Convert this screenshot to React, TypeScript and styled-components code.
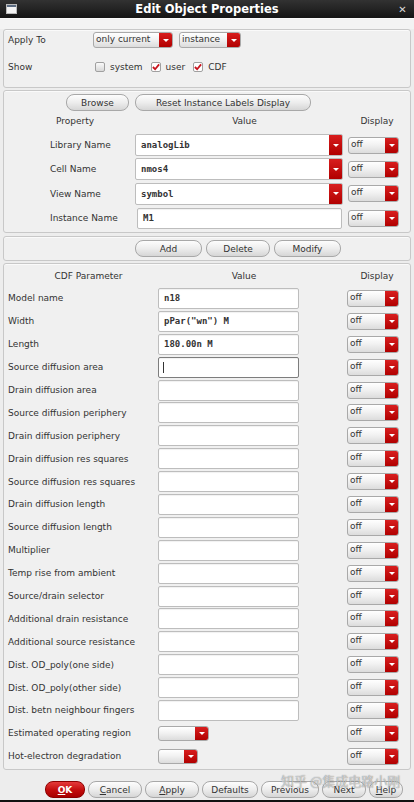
import React, { FunctionComponent } from "react";
import styled, { createGlobalStyle } from "styled-components";

const GlobalStyle = createGlobalStyle`
  html, body {
    margin: 0;
    padding: 0;
    background: #ececec;
  }
  body {
    font-family: "DejaVu Sans", "Liberation Sans", sans-serif;
    font-size: 9px;
    color: #333;
  }
`;

const Window = styled.div`
  position: relative;
  width: 414px;
  height: 802px;
  display: flex;
  flex-direction: column;
  background: #ededed;
  overflow: hidden;
`;

const TitleBar = styled.div`
  height: 18px;
  display: flex;
  align-items: center;
  background: linear-gradient(#323232, #151515);
  color: #fff;
`;

const WinIcon = styled.div`
  width: 11px;
  height: 10px;
  margin: 0 6px 0 6px;
  background: linear-gradient(#5a6a80 0 2px, #f4f4f4 2px);
  border: 1px solid #bbb;
  box-sizing: border-box;
`;

const Title = styled.div`
  flex: 1;
  text-align: center;
  font: bold 11.5px "DejaVu Sans", sans-serif;
`;

const CloseX = styled.div`
  width: 23px;
  text-align: center;
  font: bold 10px "DejaVu Sans", sans-serif;
  color: #d8d8d8;
`;

const MenuStrip = styled.div`
  height: 11px;
  background: #f3f3f3;
  border-top: 1px solid #fafafa;
  box-sizing: border-box;
`;

const Panel = styled.div<{ $h: number; $mt: number; $pt: number }>`
  height: ${(p) => p.$h}px;
  margin: ${(p) => p.$mt}px 3px 0 3px;
  padding: ${(p) => p.$pt}px 0 0 0;
  box-sizing: border-box;
  border: 1px solid #c8c8c8;
  border-radius: 3px;
  background: #f0f0f0;
  box-shadow: inset 0 1px 0 #fafafa;
`;

const Row = styled.div<{ $cols: string; $h: number; $pl: number; $mt?: number }>`
  display: grid;
  grid-template-columns: ${(p) => p.$cols};
  align-items: center;
  height: ${(p) => p.$h}px;
  padding-left: ${(p) => p.$pl}px;
  margin-top: ${(p) => p.$mt || 0}px;
`;

const Label = styled.div`
  white-space: nowrap;
  color: #333;
`;

const HeaderCell = styled.div`
  text-align: center;
  color: #333;
`;

const Inline = styled.div<{ $gap: number; $pl?: number }>`
  display: flex;
  align-items: center;
  gap: ${(p) => p.$gap}px;
  padding-left: ${(p) => p.$pl || 0}px;
`;

const SelectBox = styled.div<{ $w: number; $h: number }>`
  width: ${(p) => p.$w}px;
  height: ${(p) => p.$h}px;
  display: flex;
  box-sizing: border-box;
  border: 1px solid #a9a9a9;
  border-radius: 3px;
  background: linear-gradient(#ffffff, #f2f2f2 45%, #dcdcdc);
  overflow: hidden;
`;

const SelectText = styled.div`
  flex: 1;
  padding-left: 2px;
  line-height: 13px;
  white-space: nowrap;
  overflow: hidden;
  color: #333;
`;

const Arrow = styled.div<{ $w: number }>`
  width: ${(p) => p.$w}px;
  display: flex;
  align-items: center;
  justify-content: center;
  background: linear-gradient(#d81e1e, #b10000);
  &::after {
    content: "";
    border-left: 3px solid transparent;
    border-right: 3px solid transparent;
    border-top: 3px solid #fff;
  }
`;

const Select: FunctionComponent<{ w: number; h?: number; text?: string }> = ({ w, h = 17, text }) => (
  <SelectBox $w={w} $h={h}>
    <SelectText>{text}</SelectText>
    <Arrow $w={13} />
  </SelectBox>
);

const CheckItem = styled.label`
  display: flex;
  align-items: center;
  gap: 5px;
  color: #333;
`;

const Box = styled.span<{ $on: boolean }>`
  width: 10px;
  height: 10px;
  box-sizing: border-box;
  border: 1px solid #a0a0a0;
  border-radius: 2px;
  background: ${(p) => (p.$on ? "#fff" : "linear-gradient(#fafafa, #d8d8d8)")};
  display: flex;
  align-items: center;
  justify-content: center;
`;

const Check = () => (
  <svg width="9" height="8" viewBox="0 0 9 8">
    <path d="M1 4 L3.5 6.5 L8 1" fill="none" stroke="#c8141e" strokeWidth="2" />
  </svg>
);

const Button = styled.div<{ $w: number; $primary?: boolean }>`
  width: ${(p) => p.$w}px;
  height: 17px;
  box-sizing: border-box;
  border: 1px solid ${(p) => (p.$primary ? "#8c0000" : "#a8a8a8")};
  border-radius: 8px;
  background: ${(p) =>
    p.$primary
      ? "linear-gradient(#e53a3a, #c20c0c 55%, #a80000)"
      : "linear-gradient(#fdfdfd, #ededed 50%, #d6d6d6)"};
  color: ${(p) => (p.$primary ? "#fff" : "#333")};
  font-weight: ${(p) => (p.$primary ? "bold" : "normal")};
  display: flex;
  align-items: center;
  justify-content: center;
  white-space: nowrap;
`;

const U = styled.span`
  text-decoration: underline;
`;

const Field = styled.div<{ $w: number; $focus?: boolean; $ml?: number }>`
  width: ${(p) => p.$w}px;
  height: 21px;
  margin-left: ${(p) => p.$ml || 0}px;
  box-sizing: border-box;
  border: 1px solid ${(p) => (p.$focus ? "#7d7d7d" : "#bdbdbd")};
  border-radius: 2px;
  background: #fff;
  box-shadow: inset 0 1px 1px rgba(0, 0, 0, 0.06);
  display: flex;
  align-items: center;
  padding-left: 5px;
  font: bold 9px "DejaVu Sans Mono", "Liberation Mono", monospace;
  color: #333;
  white-space: pre;
`;

const Caret = styled.span`
  width: 1px;
  height: 11px;
  background: #333;
  margin-left: -1px;
`;

const ComboBox = styled.div<{ $w: number }>`
  width: ${(p) => p.$w}px;
  height: 22px;
  display: flex;
  box-sizing: border-box;
  border: 1px solid #bdbdbd;
  border-radius: 2px;
  background: #fff;
  overflow: hidden;
`;

const ComboText = styled.div`
  flex: 1;
  display: flex;
  align-items: center;
  padding-left: 5px;
  font: bold 9px "DejaVu Sans Mono", "Liberation Mono", monospace;
  color: #333;
`;

const Footer = styled.div`
  height: 30px;
  padding: 11px 0 0 45px;
  box-sizing: border-box;
  display: flex;
  gap: 3px;
`;

const BottomEdge = styled.div`
  height: 2px;
  background: #111;
`;

const Watermark = styled.div`
  position: absolute;
  left: 281px;
  top: 771px;
  font: 13px "Noto Sans CJK SC", sans-serif;
  color: rgba(255, 255, 255, 0.6);
  text-shadow: 0 0 1px rgba(60, 60, 60, 0.8);
  white-space: nowrap;
  pointer-events: none;
`;

const instRows = [
  { label: "Library Name", value: "analogLib", combo: true },
  { label: "Cell Name", value: "nmos4", combo: true },
  { label: "View Name", value: "symbol", combo: true },
  { label: "Instance Name", value: "M1", combo: false },
];

type CdfRow = { label: string; value?: string; focus?: boolean; select?: number };

const cdfRows: CdfRow[] = [
  { label: "Model name", value: "n18" },
  { label: "Width", value: 'pPar("wn") M' },
  { label: "Length", value: "180.00n M" },
  { label: "Source diffusion area", focus: true },
  { label: "Drain diffusion area" },
  { label: "Source diffusion periphery" },
  { label: "Drain diffusion periphery" },
  { label: "Drain diffusion res squares" },
  { label: "Source diffusion res squares" },
  { label: "Drain diffusion length" },
  { label: "Source diffusion length" },
  { label: "Multiplier" },
  { label: "Temp rise from ambient" },
  { label: "Source/drain selector" },
  { label: "Additional drain resistance" },
  { label: "Additional source resistance" },
  { label: "Dist. OD_poly(one side)" },
  { label: "Dist. OD_poly(other side)" },
  { label: "Dist. betn neighbour fingers" },
  { label: "Estimated operating region", select: 51 },
  { label: "Hot-electron degradation", select: 40 },
];

const App: FunctionComponent = () => {
  return (
    <Window>
      <GlobalStyle />
      <TitleBar>
        <WinIcon />
        <Title>Edit Object Properties</Title>
        <CloseX>✕</CloseX>
      </TitleBar>
      <MenuStrip />

      <Panel $h={59} $mt={0} $pt={2}>
        <Row $cols="85px auto" $h={16} $pl={4}>
          <Label>Apply To</Label>
          <Inline $gap={6}>
            <Select w={80} h={16} text="only current" />
            <Select w={62} h={16} text="instance" />
          </Inline>
        </Row>
        <Row $cols="85px auto" $h={14} $pl={4} $mt={12}>
          <Label>Show</Label>
          <Inline $gap={8} $pl={2}>
            <CheckItem>
              <Box $on={false} />
              system
            </CheckItem>
            <CheckItem>
              <Box $on={true}>
                <Check />
              </Box>
              user
            </CheckItem>
            <CheckItem>
              <Box $on={true}>
                <Check />
              </Box>
              CDF
            </CheckItem>
          </Inline>
        </Row>
      </Panel>

      <Panel $h={143} $mt={2} $pt={3}>
        <Inline $gap={6} $pl={62}>
          <Button $w={63}>Browse</Button>
          <Button $w={176}>Reset Instance Labels Display</Button>
        </Inline>
        <Row $cols="142px 197px 68px" $h={14} $pl={0} $mt={3}>
          <HeaderCell>Property</HeaderCell>
          <HeaderCell>Value</HeaderCell>
          <HeaderCell>Display</HeaderCell>
        </Row>
        <div style={{ marginTop: 5 }}>
          {instRows.map((r) => (
            <Row key={r.label} $cols="85px 213px 51px" $h={24.33} $pl={46}>
              <Label>{r.label}</Label>
              {r.combo ? (
                <ComboBox $w={208}>
                  <ComboText>{r.value}</ComboText>
                  <Arrow $w={13} />
                </ComboBox>
              ) : (
                <Field $w={205} $ml={2}>
                  {r.value}
                </Field>
              )}
              <Select w={51} text="off" />
            </Row>
          ))}
        </div>
      </Panel>

      <Panel $h={25} $mt={3} $pt={3}>
        <Inline $gap={4} $pl={131}>
          <Button $w={67}>Add</Button>
          <Button $w={64}>Delete</Button>
          <Button $w={67}>Modify</Button>
        </Inline>
      </Panel>

      <Panel $h={507} $mt={2} $pt={4}>
        <Row $cols="169px 142px 28px 68px" $h={16} $pl={0}>
          <HeaderCell>CDF Parameter</HeaderCell>
          <HeaderCell>Value</HeaderCell>
          <span />
          <HeaderCell>Display</HeaderCell>
        </Row>
        <div style={{ marginTop: 3 }}>
          {cdfRows.map((r) => (
            <Row key={r.label} $cols="150px 189px 52px" $h={22.9} $pl={4}>
              <Label>{r.label}</Label>
              {r.select ? (
                <Select w={r.select} h={15} />
              ) : (
                <Field $w={141} $focus={r.focus}>
                  {r.focus ? <Caret /> : r.value}
                </Field>
              )}
              <Select w={52} text="off" />
            </Row>
          ))}
        </div>
      </Panel>

      <Footer>
        <Button $w={40} $primary>
          <U>O</U>K
        </Button>
        <Button $w={54}>
          <U>C</U>ancel
        </Button>
        <Button $w={54}>
          <U>A</U>pply
        </Button>
        <Button $w={56}>Defaults</Button>
        <Button $w={58}>Previous</Button>
        <Button $w={44}>Next</Button>
        <Button $w={34}>
          <U>H</U>elp
        </Button>
      </Footer>
      <BottomEdge />
      <Watermark>知乎 @集成电路小刚</Watermark>
    </Window>
  );
};

export default App;
